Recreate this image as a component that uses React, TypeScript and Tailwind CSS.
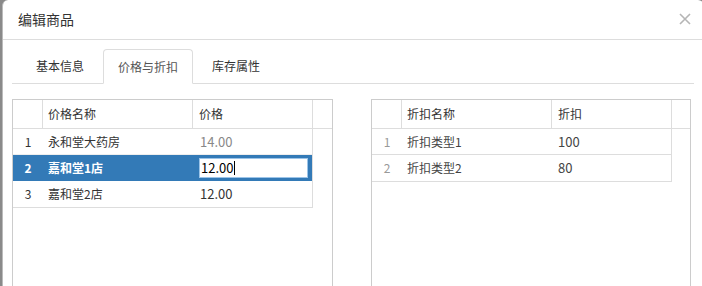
const font = { fontFamily: '"Noto Sans CJK SC", "Noto Sans", sans-serif' };

const prices = [
  { id: 1, name: "永和堂大药房", price: "14.00" },
  { id: 2, name: "嘉和堂1店", price: "12.00" },
  { id: 3, name: "嘉和堂2店", price: "12.00" },
];

const discounts = [
  { id: 1, name: "折扣类型1", value: "100" },
  { id: 2, name: "折扣类型2", value: "80" },
];

function GridHeader({ nameLabel, valueLabel }: { nameLabel: string; valueLabel: string }) {
  return (
    <div className="flex h-[29px] border-b border-[#ddd] text-[12px] text-[#333]">
      <div className="w-[30px] shrink-0 border-r border-[#ddd]" />
      <div className="w-[150px] shrink-0 border-r border-[#ddd] flex items-center pl-[5px]">{nameLabel}</div>
      <div className="w-[120px] shrink-0 border-r border-[#ddd] flex items-center pl-[6px]">{valueLabel}</div>
      <div className="flex-1" />
    </div>
  );
}

export default function App() {
  return (
    <div className="h-[286px] w-[702px] overflow-hidden bg-[#8a8a8a] pl-[2px]" style={font}>
      <div className="h-full w-[702px] bg-white rounded-t-[6px] border-l border-[#bbb]">
        <div className="h-[40px] flex items-center justify-between pl-[15px] pr-[13px] border-b border-[#ddd]">
          <span className="text-[14px] text-[#333]">编辑商品</span>
          <svg width="12" height="12" viewBox="0 0 12 12" className="mb-[1px]">
            <path d="M1 1 L11 11 M11 1 L1 11" stroke="#b5b5b5" strokeWidth="1.6" />
          </svg>
        </div>

        <div className="pl-[9px] pr-[10px] pt-[9px]">
          <div className="flex h-[35px] border-b border-[#ddd] pl-[9px] text-[12px]">
            <div className="w-[78px] mr-[4px] flex items-center justify-center text-[#333]">基本信息</div>
            <div className="w-[90px] mr-[4px] flex items-center justify-center text-[#555] bg-white border border-[#ddd] border-b-white rounded-t-[4px] -mb-px">
              价格与折扣
            </div>
            <div className="px-[15px] flex items-center text-[#333]">库存属性</div>
          </div>

          <div className="flex gap-[38px] mt-[15px]">
            <div className="w-[321px] h-[200px] border border-[#ccc] shrink-0">
              <GridHeader nameLabel="价格名称" valueLabel="价格" />
              <div className="w-[300px] border-r border-b border-[#ddd] text-[12px]">
                {prices.map((p) =>
                  p.id === 2 ? (
                    <div key={p.id} className="flex h-[26px] items-center bg-[#337ab7] text-white font-bold">
                      <div className="w-[30px] text-center">{p.id}</div>
                      <div className="w-[150px] pl-[5px]">{p.name}</div>
                      <div className="w-[119px] pl-[6px]">
                        <div className="w-[109px] h-[20px] bg-white border border-[#9cc4e8] flex items-center pl-[1px] text-[13px] font-normal text-black">
                          {p.price}
                          <span className="inline-block w-px h-[14px] bg-black ml-[1px]" />
                        </div>
                      </div>
                    </div>
                  ) : (
                    <div key={p.id} className="flex h-[26px] items-center border-b border-[#eee] last:border-b-0 text-[#333]">
                      <div className="w-[30px] text-center">{p.id}</div>
                      <div className="w-[150px] pl-[5px]">{p.name}</div>
                      <div className={`w-[119px] pl-[7px] text-[13px] ${p.id === 1 ? "text-[#888]" : "text-[#333]"}`}>{p.price}</div>
                    </div>
                  )
                )}
              </div>
            </div>

            <div className="w-[320px] h-[200px] border border-[#ccc] shrink-0">
              <GridHeader nameLabel="折扣名称" valueLabel="折扣" />
              <div className="w-[300px] border-r border-b border-[#ddd] text-[12px]">
                {discounts.map((d, i) => (
                  <div
                    key={d.id}
                    className={`flex h-[26px] items-center text-[#444] ${i < discounts.length - 1 ? "border-b border-[#ddd]" : ""}`}
                  >
                    <div className="w-[30px] text-center text-[#999]">{d.id}</div>
                    <div className="w-[150px] pl-[5px]">{d.name}</div>
                    <div className="w-[119px] pl-[6px] text-[13px]">{d.value}</div>
                  </div>
                ))}
              </div>
            </div>
          </div>
        </div>
      </div>
    </div>
  );
}
